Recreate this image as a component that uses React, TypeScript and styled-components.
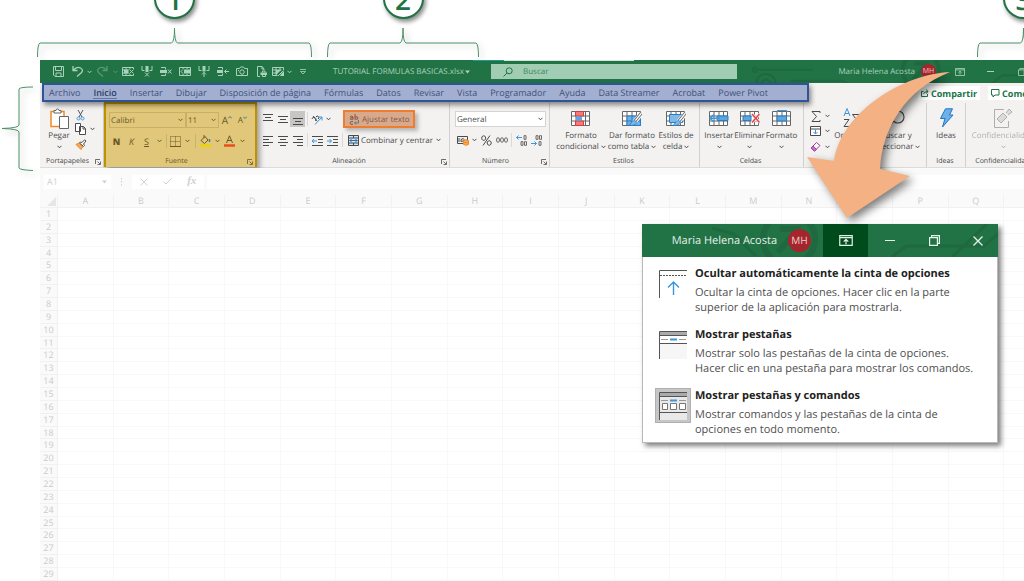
import React from "react";
import styled, { createGlobalStyle, css } from "styled-components";

const green = "#217346";
const ink = "#4a4a4a";
const blue = "#3a96dd";
const orange = "#f08a24";

const GlobalStyle = createGlobalStyle`
  * { box-sizing: border-box; }
  body { margin: 0; background: #fff; font-family: "Open Sans", "Noto Sans", sans-serif; font-size: 8px; line-height: 11px; color: ${ink}; text-rendering: geometricPrecision; }
  button, input, select { font: inherit; color: inherit; margin: 0; padding: 0; border: 0; background: none; text-rendering: inherit; }
  svg { display: block; flex: none; }
`;

/* ---------- page frame ---------- */

const Page = styled.main`
  position: relative;
  display: flex;
  flex-direction: column;
  height: 100vh;
  overflow: hidden;
`;
const Callouts = styled.header`
  display: flex;
  flex: none;
  gap: 15px;
  height: 60px;
  padding-left: 37px;
  overflow: hidden;
`;
const Callout = styled.div<{ $w: number; $last?: boolean }>`
  display: flex;
  flex: none;
  flex-direction: column;
  align-items: center;
  gap: 8px;
  width: ${(p) => p.$w}px;
  margin-top: -22px;
  ${(p) => p.$last && css`margin-left: auto; margin-right: -46px;`}
  svg { filter: drop-shadow(3px 3px 3px rgba(0, 0, 0, 0.25)); }
`;
const Badge = styled.span`
  display: flex;
  flex: none;
  align-items: center;
  justify-content: center;
  width: 41px;
  height: 41px;
  padding-top: 2px;
  border: 2px solid ${green};
  border-radius: 50%;
  background: #fff;
  box-shadow: 2px 3px 4px rgba(0, 0, 0, 0.45);
  color: ${green};
  font-size: 28px;
  font-weight: 600;
  line-height: 36px;
`;
const Stage = styled.div`
  display: flex;
  flex: 1;
  min-height: 0;
`;
const Gutter = styled.div`
  flex: none;
  width: 40px;
  padding-top: 26px;
  svg { filter: drop-shadow(3px 3px 3px rgba(0, 0, 0, 0.25)); }
`;
const Workbook = styled.section`
  display: flex;
  flex: 1;
  flex-direction: column;
  min-width: 1027px;
  margin-right: -43px;
`;

/* ---------- title bar ---------- */

const TitleBar = styled.div`
  position: relative;
  display: flex;
  flex: none;
  align-items: center;
  height: 23px;
  padding-left: 9px;
  color: #a9d2ba;
  background:
    linear-gradient(#1a9c93, #1a9c93) 433px 0 / 31px 1px no-repeat,
    linear-gradient(#d5e5dc, #d5e5dc) 464px 0 / 130px 1px no-repeat,
    ${green};
`;
const Circuit = styled.svg`
  position: absolute;
  top: 0;
  right: 0;
`;
const BarButton = styled.button<{ $w: number; $dim?: boolean }>`
  position: relative;
  display: flex;
  flex: none;
  align-items: center;
  justify-content: center;
  width: ${(p) => p.$w}px;
  height: 23px;
  opacity: ${(p) => (p.$dim ? 0.4 : 1)};
`;
const FileName = styled.button`
  display: flex;
  flex: none;
  align-items: center;
  gap: 1px;
  width: 158px;
  padding-left: 19px;
  font-size: 8px;
  white-space: nowrap;
`;
const Search = styled.label`
  position: relative;
  display: flex;
  flex: none;
  align-items: center;
  gap: 10px;
  width: 246px;
  height: 15px;
  margin-left: 19px;
  padding-left: 12px;
  background: #a0cdb3;
  color: ${green};
  input { width: 160px; outline: 0; font-size: 8px; line-height: 11px; }
  input::placeholder { color: #3d8a5e; opacity: 1; }
`;
const Account = styled.button`
  position: relative;
  display: flex;
  align-items: center;
  gap: 6px;
  margin-left: auto;
  margin-right: 8px;
  font-size: 8px;
  white-space: nowrap;
`;
const Avatar = styled.span<{ $size: number }>`
  display: flex;
  flex: none;
  align-items: center;
  justify-content: center;
  width: ${(p) => p.$size}px;
  height: ${(p) => p.$size}px;
  border-radius: 50%;
  background: #a4262c;
  color: #f0c8ca;
  font-size: ${(p) => (p.$size > 20 ? 10 : 7)}px;
`;

/* ---------- tabs ---------- */

const TabRow = styled.div`
  display: flex;
  flex: none;
  height: 20px;
  padding-left: 2px;
  background: #f3f2f1;
`;
const Tabs = styled.nav`
  position: relative;
  z-index: 2;
  display: flex;
  flex: none;
  align-items: center;
  gap: 13px;
  width: 767px;
  height: 19px;
  padding-left: 5px;
  border: 2px solid #2f5597;
  background: #a2afd1;
  box-shadow: 2px 3px 5px rgba(0, 0, 0, 0.45);
`;
const Tab = styled.a<{ $on?: boolean }>`
  color: ${(p) => (p.$on ? "#2c3f68" : "#43527a")};
  font-size: 9px;
  font-weight: ${(p) => (p.$on ? 600 : 400)};
  text-decoration: none;
  white-space: nowrap;
  ${(p) => p.$on && css`box-shadow: 0 1px 0 #5d7b9f;`}
`;
const ShareButtons = styled.div`
  display: flex;
  gap: 8px;
  margin-left: 109px;
  padding-top: 3px;
`;
const Share = styled.button`
  display: flex;
  align-items: center;
  gap: 2px;
  height: 14px;
  padding: 0 3px;
  background: #fff;
  color: ${green};
  font-size: 9px;
  font-weight: 700;
`;

/* ---------- ribbon ---------- */

const Ribbon = styled.div`
  display: flex;
  flex: none;
  height: 65px;
  background: #f3f2f1;
  border-bottom: 1px solid #dcdcdc;
`;
const Group = styled.section<{ $w: number; $marked?: boolean }>`
  display: flex;
  flex: none;
  flex-direction: column;
  width: ${(p) => p.$w}px;
  border-right: 1px solid #d2d0ce;
  ${(p) =>
    p.$marked &&
    css`
      height: 65px;
      margin-top: -1px;
      border: solid #bf9000;
      border-width: 2px 2px 0;
      background: #e0c779;
      color: #6a5a28;
      box-shadow: 3px 3px 5px rgba(0, 0, 0, 0.35);
    `}
`;
const GroupBody = styled.div<{ $pad?: number; $gap?: number }>`
  display: flex;
  flex: 1;
  gap: ${(p) => p.$gap ?? 0}px;
  padding: 6px 0 0 ${(p) => p.$pad ?? 0}px;
`;
const GroupLabel = styled.h2`
  display: flex;
  align-items: center;
  justify-content: center;
  height: 13px;
  margin: 0;
  padding: 2px 2px 0 0;
  font-size: 7px;
  font-weight: 400;
  line-height: 11px;
  span { flex: 1; text-align: center; white-space: nowrap; }
`;
const Rows = styled.div<{ $gap?: number }>`
  display: flex;
  flex: none;
  flex-direction: column;
  gap: ${(p) => p.$gap ?? 1}px;
`;
const Row = styled.div<{ $gap?: number; $h?: number }>`
  display: flex;
  align-items: center;
  gap: ${(p) => p.$gap ?? 0}px;
  height: ${(p) => p.$h ?? 20}px;
`;
const Tool = styled.button<{ $w?: number; $on?: boolean }>`
  display: flex;
  flex: none;
  align-items: center;
  justify-content: center;
  width: ${(p) => p.$w ?? 15}px;
  height: 16px;
  background: ${(p) => (p.$on ? "#c8c6c4" : "none")};
  font-size: 10px;
`;
const Letter = styled(Tool)<{ $kind?: "bold" | "italic" | "underline" }>`
  font-size: 9px;
  font-weight: ${(p) => (p.$kind === "bold" ? 800 : 400)};
  font-style: ${(p) => (p.$kind === "italic" ? "italic" : "normal")};
  text-decoration: ${(p) => (p.$kind === "underline" ? "underline" : "none")};
`;
const Rule = styled.i`
  flex: none;
  width: 1px;
  height: 14px;
  margin: 0 2px;
  background: rgba(0, 0, 0, 0.1);
`;
const TextTool = styled.button<{ $marked?: boolean }>`
  display: flex;
  align-items: center;
  gap: 2px;
  height: 18px;
  padding: 0 2px 0 3px;
  white-space: nowrap;
  ${(p) =>
    p.$marked &&
    css`
      width: 72px;
      border: 2px solid #ed7d31;
      background: #d9a98c;
      color: #82584a;
      padding: 0 4px;
      box-shadow: 3px 3px 4px rgba(0, 0, 0, 0.25);
    `}
`;
const SelectBox = styled.label<{ $w: number; $white?: boolean }>`
  display: flex;
  flex: none;
  align-items: center;
  width: ${(p) => p.$w}px;
  height: 16px;
  padding: 0 2px 0 1px;
  border: 1px solid ${(p) => (p.$white ? "#d6d4d2" : "#c9b067")};
  background: ${(p) => (p.$white ? "#fff" : "none")};
  select { flex: 1; min-width: 0; appearance: none; outline: 0; font-size: 8px; }
`;
const BigButton = styled.button<{ $w: number; $dim?: boolean }>`
  display: flex;
  flex: none;
  flex-direction: column;
  align-items: center;
  gap: 3px;
  width: ${(p) => p.$w}px;
  white-space: nowrap;
  opacity: ${(p) => (p.$dim ? 0.4 : 1)};
  > span { display: flex; flex-direction: column; align-items: center; height: 22px; }
`;
const Picture = styled.i`
  display: flex;
  align-items: center;
  justify-content: center;
  height: 18px;
`;
const Line = styled.span`
  display: flex;
  align-items: center;
  gap: 2px;
  height: 11px;
`;

/* ---------- formula bar and sheet ---------- */

const FormulaBar = styled.div`
  display: flex;
  flex: none;
  align-items: center;
  height: 27px;
  padding: 0 0 0 4px;
  background: #fafafa;
  color: #d0d0d0;
  font-size: 9px;
`;
const NameBox = styled.label`
  display: flex;
  align-items: center;
  width: 67px;
  height: 14px;
  padding: 0 4px 0 3px;
  background: #fff;
  input { flex: 1; min-width: 0; }
`;
const Entry = styled.div`
  display: flex;
  align-items: center;
  justify-content: space-around;
  width: 72px;
  height: 14px;
  margin: 0 3px 0 2px;
  background: #fff;
  i { font-family: "Liberation Serif", serif; font-size: 11px; font-weight: 700; }
`;
const FormulaInput = styled.input`
  && { flex: 1; height: 14px; background: #fff; }
`;
const SheetArea = styled.div`
  flex: 1;
  min-height: 386px;
  background: #fafafa;
`;
const Sheet = styled.table`
  width: calc(100% - 7px);
  height: 100%;
  table-layout: fixed;
  border-collapse: separate;
  border-spacing: 0;
  background: #fff;
  color: #cbcbcb;
  font-size: 9px;
  line-height: 10px;
  th { padding: 0; border: solid #f1f1f1; border-width: 0 1px 1px 0; background: #fafafa; font-weight: 400; text-align: center; }
  td { padding: 0; border: solid #f8f8f8; border-width: 0 1px 1px 0; }
  thead th { height: 13px; }
  thead th:first-child { width: 18px; }
  tbody th { height: 12px; }
`;

/* ---------- overlays ---------- */

const Arrow = styled.svg`
  position: absolute;
  top: 60px;
  left: 800px;
  z-index: 4;
  filter: drop-shadow(4px 4px 4px rgba(0, 0, 0, 0.5));
`;
const Popup = styled.aside`
  position: absolute;
  top: 224px;
  left: 642px;
  z-index: 3;
  width: 356px;
  background: #fff;
  border: 1px solid #b9b9b9;
  border-top: 0;
  box-shadow: 3px 3px 5px rgba(0, 0, 0, 0.5);
`;
const PopupBar = styled.div`
  position: relative;
  display: flex;
  align-items: center;
  justify-content: flex-end;
  height: 33px;
  margin: 0 -1px;
  background: ${green};
  color: #e6f1ea;
  font-size: 11px;
`;
const PopupName = styled.span`
  position: relative;
  display: flex;
  align-items: center;
  gap: 11px;
  margin-right: 12px;
  white-space: nowrap;
`;
const PopupButton = styled.button<{ $w: number; $on?: boolean }>`
  position: relative;
  display: flex;
  align-items: center;
  justify-content: center;
  width: ${(p) => p.$w}px;
  height: 33px;
  background: ${(p) => (p.$on ? "#004b1c" : "none")};
`;
const Options = styled.ul`
  display: flex;
  flex-direction: column;
  gap: 12px;
  margin: 0;
  padding: 9px 10px 5px 12px;
  list-style: none;
`;
const Option = styled.button`
  display: flex;
  gap: 4px;
  width: 100%;
  text-align: left;
  font-size: 11px;
  line-height: 15px;
  color: #505050;
  white-space: nowrap;
  b { display: block; height: 19px; color: #222; line-height: 16px; }
`;
const OptionIcon = styled.i<{ $on?: boolean }>`
  flex: none;
  display: flex;
  align-items: center;
  justify-content: center;
  width: 36px;
  height: 35px;
  border: 1px solid ${(p) => (p.$on ? "#b0b0b0" : "transparent")};
  background: ${(p) => (p.$on ? "#c6c6c6" : "none")};
`;

/* ---------- drawings ---------- */

type DrawProps = { w: number; h: number; box?: string; children: React.ReactNode; sw?: number };
const Draw = ({ w, h, box, children, sw = 1 }: DrawProps) => (
  <svg width={w} height={h} viewBox={box ?? `0 0 ${w} ${h}`} fill="none" stroke="currentColor" strokeWidth={sw} aria-hidden="true">
    {children}
  </svg>
);
const Chevron = () => (
  <Draw w={5} h={4}><path d="M.5 .8 2.5 2.8 4.5 .8" /></Draw>
);
const Triangle = () => (
  <Draw w={5} h={4}><path d="M0 .5h5L2.500 3.500z" fill="currentColor" stroke="none" /></Draw>
);
const Launcher = () => (
  <Draw w={6} h={6}><path d="M.5 5V.5H5M2.500 2.500 5 5M5.500 2.500v3h-3" strokeWidth=".8" /></Draw>
);
const Brace = ({ w }: { w: number }) => {
  const m = w / 2;
  return (
    <Draw w={w} h={32}>
      <path stroke="#4b9069" d={`M.5 30Q.5 17 3 16H${m - 3}Q${m} 15 ${m} 1Q${m} 15 ${m + 3} 16H${w - 3}Q${w - 0.5} 17 ${w - 0.5} 30`} />
    </Draw>
  );
};
const SideBrace = () => (
  <Draw w={36} h={86}>
    <path stroke="#4b9069" d="M33 1Q20 1 19 3V39Q19 42 2 42.500Q19 43 19 46V82Q20 84 33 84.500" />
  </Draw>
);
const RibbonIcon = ({ w = 10 }: { w?: number }) => (
  <Draw w={w} h={Math.round(w * 0.8)} box="0 0 15 12" sw={1.3}>
    <path d="M.7 .7h13.600v10.600H.7zM.7 2.900h13.600M7.500 10V5M5 7.200 7.500 4.800 10 7.200" />
  </Draw>
);
const RestoreIcon = ({ s }: { s: number }) => (
  <Draw w={s} h={s} box="0 0 11 11" sw={1.2}><path d="M.6 2.600h7.800v7.800H.6zM2.600 2.600V.6h7.800v7.800h-2" /></Draw>
);

/* small table glyph with an action mark, used in the quick access bar */
const Sheetlet = ({ kind }: { kind: number }) => (
  <Draw w={12} h={11}>
    {kind === 0 && (
      <>
        <path d="M11.500 3V1.500H.5v8h11V8M.5 4h6M.5 7h6M4 1v2M4 8v2M8 1v2M8 8v2M7.500 3.500l4 4M11.500 3.500l-4 4" />
        <path fill="currentColor" stroke="none" d="M2 3.500h4.500v4H2z" />
      </>
    )}
    {kind === 1 && (
      <>
        <path d="M1 0v4.500h2.500M11 0v4.500H8.500M4 6.500l4 4M8 6.500l-4 4" />
        <path fill="currentColor" stroke="none" d="M4.500 0h3v6h-3z" />
      </>
    )}
    {kind === 2 && (
      <>
        <path d="M1 1.500h4.500v2M1 9.500h4.500v-2M8 3.500l3.500 4M11.500 3.500 8 7.500" />
        <path fill="currentColor" stroke="none" d="M0 4h7v3H0z" />
      </>
    )}
    {kind === 3 && (
      <>
        <path d="M.5 1.500h11v8H.5zM4 1v2M8 1v2M4 8v2M8 8v2M4 3.500 2 5.500l2 2" />
        <path fill="currentColor" stroke="none" d="M5 3.500h6v4H5z" />
      </>
    )}
    {kind === 4 && (
      <>
        <path d="M1 0v4.500h2.500M11 0v4.500H8.500M6 6v5M4 8.500l2-2 2 2" />
        <path fill="currentColor" stroke="none" d="M4.500 0h3v5.500h-3z" />
      </>
    )}
    {kind === 5 && (
      <>
        <path d="M1 1.500h4.500v2M1 9.500h4.500v-2M12 5.500H7.500M9.500 3.500l-2 2 2 2" />
        <path fill="currentColor" stroke="none" d="M0 4h6v3H0z" />
      </>
    )}
    {kind === 6 && <path d="M.5 2.500h3L4.500 1h3l1 1.500h3v7H.5zM6 3.800a2.200 2.200 0 1 0 .01 0zM2 4.500h1" />}
    {kind === 7 && (
      <>
        <path d="M9 4V3L7 .5H2.500v10H5M7 .5V3h2M7.500 6.500V5h2.500v1.500M7.500 9v1.500h3V9" />
        <path fill="currentColor" stroke="none" d="M5.500 6.500H12V9H5.500z" />
      </>
    )}
    {kind === 8 && (
      <>
        <path d="M11.500 4V1.500H.5v8h5M.5 4h9M.5 7h5M4 1v8M8 1v4M11.500 4.500 6 10" />
        <path fill="currentColor" stroke="none" d="M4 4h5L4 9zM9 8l3-3v5H8z" />
      </>
    )}
  </Draw>
);

const LinesIcon = ({ ys, align = "left" }: { ys: number[]; align?: "left" | "center" | "right" }) => (
  <Draw w={10} h={11}>
    {ys.map((y, i) => {
      const len = i % 2 ? 6 : 10;
      const x = align === "left" ? 0 : align === "center" ? (10 - len) / 2 : 10 - len;
      return <path key={y} d={`M${x} ${y + 0.5}h${len}`} />;
    })}
  </Draw>
);
const IndentIcon = ({ out }: { out?: boolean }) => (
  <Draw w={11} h={11}>
    <path d="M0 1.500h11M6 4.500h5M6 7.500h5M0 10.500h11" />
    <path stroke={blue} d={out ? "M5 6H0M2 4 0 6l2 2" : "M0 6h4.500M2.500 4l2 2-2 2"} />
  </Draw>
);
const TableGlyph = ({ children }: { children?: React.ReactNode }) => (
  <Draw w={20} h={16}>
    <path fill="#fff" stroke="#666" d="M.5 1.500h18v14H.5zM.5 6h18M.5 11h18M5 1.500v14M10 1.500v14M14.500 1.500v14" />
    {children}
  </Draw>
);
const Brush = () => (
  <>
    <path d="M19.500 3.500 12 12.500" stroke="#fff" strokeWidth="4.500" />
    <path d="M19.500 3 13 11" stroke="#666" strokeWidth="3" />
    <path d="M19.500 3 13 11" stroke="#fff" strokeWidth="1.200" />
    <path d="M12.500 10.500q2 .5 2 2.500-2 3-8.500 2.500 3-.5 3-2.500 1-2.500 3.500-2.500z" fill="#7db8e8" stroke="#2b7cc0" strokeWidth=".8" />
  </>
);
const CircuitArt = ({ w, h, box, extra }: { w: number; h: number; box: string; extra?: boolean }) => (
  <Circuit width={w} height={h} viewBox={box} fill="none" stroke="#1f6840" strokeWidth="3" aria-hidden="true">
    {!extra && <path d="M70 4l22 6 22 22" />}
    <path d="M250 33l14-11h78l14-12M310 33 345 0" />
    <circle cx="147" cy="15" r="26" strokeWidth="6" />
    <path d="M138 5h18v16M136 28l20-22" strokeWidth="6" />
    {extra && (
      <>
        <path d="M-87 14H-8M-40 30H35l18 10" />
        <circle cx="-91" cy="14" r="3" />
        <circle cx="-75" cy="34" r="14" />
        <circle cx="-75" cy="34" r="6" />
      </>
    )}
  </Circuit>
);

/* ---------- content ---------- */

const tabs = ["Archivo", "Inicio", "Insertar", "Dibujar", "Disposición de página", "Fórmulas", "Datos", "Revisar", "Vista", "Programador", "Ayuda", "Data Streamer", "Acrobat", "Power Pivot"];
const columns = "ABCDEFGHIJKLMNOPQR".split("");
const rows = Array.from({ length: 29 }, (_, i) => i + 1);

const options = [
  {
    title: "Ocultar automáticamente la cinta de opciones",
    lines: ["Ocultar la cinta de opciones. Hacer clic en la parte", "superior de la aplicación para mostrarla."],
    icon: (
      <Draw w={28} h={28}>
        <path stroke="#555" d="M.5 28V.5H28" />
        <path stroke="#555" strokeDasharray="2 1" d="M1 5.500h27" />
        <path stroke={blue} strokeWidth="1.400" d="M14.500 25V12M9 17.500l5.500-5.500 5.500 5.500" />
      </Draw>
    ),
  },
  {
    title: "Mostrar pestañas",
    lines: ["Mostrar solo las pestañas de la cinta de opciones.", "Hacer clic en una pestaña para mostrar los comandos."],
    icon: (
      <Draw w={28} h={28}>
        <path fill="#f6f6f6" stroke="none" d="M1 13h27v15H1z" />
        <path fill="#aaa" stroke="none" d="M1 1h27v3H1z" />
        <path stroke="#555" d="M.5 28V.5H28M1 4.500h27M1 12.500h27" />
        <path stroke="#999" d="M2 8.500h7M20 8.500h7" />
        <path stroke={blue} strokeWidth="2" d="M11 8.500h7" />
      </Draw>
    ),
  },
  {
    title: "Mostrar pestañas y comandos",
    on: true,
    lines: ["Mostrar comandos y las pestañas de la cinta de", "opciones en todo momento."],
    icon: (
      <Draw w={28} h={28}>
        <path fill="#e9e9e9" stroke="none" d="M1 1h27v27H1z" />
        <path fill="#aaa" stroke="none" d="M1 1h27v3H1z" />
        <path stroke="#555" d="M.5 28V.5H28M1 4.500h27M1 20.500h27" />
        <path stroke="#999" d="M2 8.500h7M20 8.500h7" />
        <path stroke={blue} strokeWidth="2" d="M11 8.500h7" />
        <path stroke="#777" fill="#fff" d="M3.500 11.500h5v6h-5zM11.500 11.500h6v6h-6zM20.500 11.500h6v6h-6z" />
      </Draw>
    ),
  },
];

const Label = ({ children, launch }: { children: string; launch?: boolean }) => (
  <GroupLabel>
    <span>{children}</span>
    {launch && <Launcher />}
  </GroupLabel>
);

const Big = ({ w, icon, lines, arrow = true, dim }: { w: number; icon: React.ReactNode; lines: string[]; arrow?: boolean; dim?: boolean }) => (
  <BigButton $w={w} $dim={dim}>
    <Picture>{icon}</Picture>
    <span>
      {lines.map((t, i) => (
        <Line key={t + i}>
          {t}
          {arrow && i === lines.length - 1 && <Chevron />}
        </Line>
      ))}
    </span>
  </BigButton>
);

export default function App() {
  return (
    <Page>
      <GlobalStyle />
      <Callouts>
        <Callout $w={275}><Badge>1</Badge><Brace w={275} /></Callout>
        <Callout $w={152}><Badge>2</Badge><Brace w={152} /></Callout>
        <Callout $w={93} $last><Badge>3</Badge><Brace w={93} /></Callout>
      </Callouts>

      <Stage>
        <Gutter><SideBrace /></Gutter>
        <Workbook>
          <TitleBar>
            <CircuitArt w={340} h={23} box="-130 0 486 33" extra />
            <BarButton $w={19} aria-label="Guardar">
              <Draw w={11} h={11}><path d="M.5 .5h10v10H2L.5 9zM2.500 .5v4h6v-4M3 10.500v-3.500h5v3.500" /></Draw>
            </BarButton>
            <BarButton $w={18} aria-label="Deshacer">
              <Draw w={11} h={11} sw={1.3}><path d="M1 0v4.500h4.500M1 4.500Q5 0 8.500 2t.5 5L5 10.500" /></Draw>
            </BarButton>
            <BarButton $w={6} aria-label="Opciones de deshacer"><Chevron /></BarButton>
            <BarButton $w={20} $dim aria-label="Rehacer">
              <Draw w={11} h={11} sw={1.3}><path d="M10 0v4.500H5.500M10 4.500Q6 0 2.500 2T2 7l4 3.500" /></Draw>
            </BarButton>
            <BarButton $w={6} $dim aria-label="Opciones de rehacer"><Chevron /></BarButton>
            {[0, 1, 2, 3, 4, 5, 6, 7].map((k) => (
              <BarButton key={k} $w={19} aria-label={`Acceso rápido ${k + 1}`}><Sheetlet kind={k} /></BarButton>
            ))}
            <BarButton $w={16} aria-label="Formato de tabla"><Sheetlet kind={8} /></BarButton>
            <BarButton $w={6} aria-label="Más formatos"><Chevron /></BarButton>
            <BarButton $w={22} aria-label="Personalizar">
              <Draw w={6} h={6}><path d="M0 .5h6M.5 2.500h5L3 5z" strokeWidth=".8" /></Draw>
            </BarButton>
            <FileName>TUTORIAL FORMULAS BASICAS.xlsx <Triangle /></FileName>
            <Search>
              <Draw w={10} h={10}><circle cx="6.200" cy="3.800" r="3" /><path d="M4 6 .5 9.500" /></Draw>
              <input placeholder="Buscar" aria-label="Buscar" />
            </Search>
            <Account>Maria Helena Acosta <Avatar $size={15}>MH</Avatar></Account>
            <BarButton $w={31} aria-label="Opciones de la cinta"><RibbonIcon /></BarButton>
            <BarButton $w={31} aria-label="Minimizar"><Draw w={7} h={3}><path d="M0 1.500h7" /></Draw></BarButton>
            <BarButton $w={31} aria-label="Restaurar"><RestoreIcon s={8} /></BarButton>
            <BarButton $w={30} aria-label="Cerrar"><Draw w={8} h={8}><path d="M0 0l8 8M8 0 0 8" /></Draw></BarButton>
          </TitleBar>

          <TabRow>
            <Tabs>
              {tabs.map((t) => <Tab key={t} href="#" $on={t === "Inicio"}>{t}</Tab>)}
            </Tabs>
            <ShareButtons>
              <Share>
                <Draw w={8} h={8}><path d="M2.500 2.500H.5v5h6V5M2.500 5Q3 2.500 7 2.500M5 .5l2.200 2L5 4.500" /></Draw>
                Compartir
              </Share>
              <Share>
                <Draw w={9} h={9}><path d="M.5 .5h7.500v5.500H4L2 8V6H.5z" /></Draw>
                Comentarios
              </Share>
            </ShareButtons>
          </TabRow>

          <Ribbon>
            <Group $w={64}>
              <GroupBody $pad={5}>
                <BigButton $w={28}>
                  <Picture>
                    <Draw w={19} h={21}>
                      <path stroke={orange} strokeWidth="1.500" fill="#fff" d="M1 3.500h13v15H1z" />
                      <path fill="#fff" stroke="#666" d="M4 5V2.500h2a1.500 1.500 0 0 1 3 0h2V5zM9.500 8.500h9v12h-9z" />
                    </Draw>
                  </Picture>
                  <span><Line>Pegar</Line><Line><Chevron /></Line></span>
                </BigButton>
                <Rows $gap={0}>
                  <Row $h={12}><Tool aria-label="Cortar">
                    <Draw w={9} h={11}><path stroke="#555" d="M2 0l4 7M7 0 3 7" /><path stroke={blue} d="M2.500 7a1.500 1.500 0 1 0 .01 0zM6.500 7a1.500 1.500 0 1 0 .01 0z" /></Draw>
                  </Tool></Row>
                  <Row $h={16}>
                    <Tool aria-label="Copiar"><Draw w={11} h={12}><path fill="#fff" d="M.5 .5h5v8h-5zM4.500 3.500h4l2 2v6h-6zM8 3.500V6h2.500" /></Draw></Tool>
                    <Tool $w={9} aria-label="Opciones de copiar"><Chevron /></Tool>
                  </Row>
                  <Row $h={16}><Tool aria-label="Copiar formato">
                    <Draw w={12} h={12}><path fill="#f7a85a" stroke={orange} d="M1 5.500l5 5 2-3-4-3.500z" /><path fill="#fff" d="M4.500 4 8.500 7.500 9.500 6.500 8.500 5 11 2 9.500 .8 7 3.500 5.500 3z" /></Draw>
                  </Tool></Row>
                </Rows>
              </GroupBody>
              <Label launch>Portapapeles</Label>
            </Group>

            <Group $w={153} $marked>
              <GroupBody $pad={3}>
                <Rows>
                  <Row>
                    <SelectBox $w={77}><select aria-label="Fuente"><option>Calibri</option></select><Chevron /></SelectBox>
                    <SelectBox $w={33}><select aria-label="Tamaño de fuente"><option>11</option></select><Chevron /></SelectBox>
                    <Tool $w={16} aria-label="Aumentar tamaño">A<Draw w={4} h={9}><path stroke="#3f7f88" d="M0 2.500l2-2 2 2" /></Draw></Tool>
                    <Tool $w={15} aria-label="Reducir tamaño"><small>A</small><Draw w={4} h={9}><path stroke="#3f7f88" d="M0 .5l2 2 2-2" /></Draw></Tool>
                  </Row>
                  <Row>
                    <Letter $kind="bold">N</Letter>
                    <Letter $kind="italic">K</Letter>
                    <Letter $kind="underline">S</Letter>
                    <Tool $w={10} aria-label="Opciones de subrayado"><Chevron /></Tool>
                    <Rule />
                    <Tool $w={13} aria-label="Bordes"><Draw w={11} h={11}><path d="M.5 .5h10v10H.5zM5.500 .5v10M.5 5.500h10" strokeDasharray="1 1" /><path d="M0 10.500h11" /></Draw></Tool>
                    <Tool $w={11} aria-label="Opciones de bordes"><Chevron /></Tool>
                    <Rule />
                    <Tool $w={14} aria-label="Color de relleno"><Draw w={11} h={12}><path d="M1 5.500 5 1.500l3 3.500-3.500 3.500zM4 0v3" /><path d="M9.500 4v3" stroke="#3f7f88" strokeWidth="1.500" /><path d="M0 10.500h11" stroke="#ecd500" strokeWidth="2.500" /></Draw></Tool>
                    <Tool $w={10} aria-label="Opciones de relleno"><Chevron /></Tool>
                    <Tool $w={15} aria-label="Color de fuente"><Draw w={11} h={12}><path d="M2.500 8 5.500 .8 8.500 8M3.500 5.500h4" /><path d="M0 10.500h11" stroke="#e8501c" strokeWidth="2.500" /></Draw></Tool>
                    <Tool $w={10} aria-label="Opciones de color"><Chevron /></Tool>
                  </Row>
                </Rows>
              </GroupBody>
              <Label launch>Fuente</Label>
            </Group>

            <Group $w={193}>
              <GroupBody $pad={3}>
                <Rows>
                  <Row>
                    <Tool aria-label="Alinear arriba"><LinesIcon ys={[0, 3, 6]} align="center" /></Tool>
                    <Tool aria-label="Alinear en el medio"><LinesIcon ys={[2, 5, 8]} align="center" /></Tool>
                    <Tool $on aria-label="Alinear abajo"><LinesIcon ys={[4, 7, 10]} align="center" /></Tool>
                    <Rule />
                    <Tool $w={13} aria-label="Orientación"><Draw w={12} h={11}><path d="M2 2l4 5M1 5a2 2 0 1 1 3 2M5 3a1.500 1.500 0 1 1 2 2" /><path stroke={blue} d="M4 10.500 11 3M7.500 3H11v3.500" /></Draw></Tool>
                    <Tool $w={10} aria-label="Opciones de orientación"><Chevron /></Tool>
                  </Row>
                  <Row>
                    <Tool aria-label="Alinear a la izquierda"><LinesIcon ys={[1, 4, 7, 10]} /></Tool>
                    <Tool aria-label="Centrar"><LinesIcon ys={[1, 4, 7, 10]} align="center" /></Tool>
                    <Tool aria-label="Alinear a la derecha"><LinesIcon ys={[1, 4, 7, 10]} align="right" /></Tool>
                    <Rule />
                    <Tool aria-label="Disminuir sangría"><IndentIcon out /></Tool>
                    <Tool aria-label="Aumentar sangría"><IndentIcon /></Tool>
                  </Row>
                </Rows>
                <Rows>
                  <Row $gap={3}>
                    <i />
                    <TextTool $marked>
                      <Draw w={11} h={11}><path d="M1 3q2-2 3 0v2.500M4 3.500Q1 3.500 1 4.700T4 5M6 0v5.500M6 3q3-1 3 1T6 5M4 7.500Q1 7 1 9t3 1.200" /><path stroke="#4d7c9e" d="M9.500 6v3H5.500M7 7.500 5.500 9 7 10.500" /></Draw>
                      Ajustar texto
                    </TextTool>
                  </Row>
                  <Row>
                    <Rule />
                    <TextTool>
                      <Draw w={11} h={11}><path fill="#cfe5f7" d="M.5 .5h10v10H.5zM.5 3h10M.5 8h10M5.500 .5V3M5.500 8v2.500" /><path stroke="#1d77c4" d="M1.500 5.500h8M3.500 4 2 5.500 3.500 7M7.500 4 9 5.500 7.500 7" /></Draw>
                      Combinar y centrar
                    </TextTool>
                    <Tool $w={7} aria-label="Opciones de combinar"><Chevron /></Tool>
                  </Row>
                </Rows>
              </GroupBody>
              <Label launch>Alineación</Label>
            </Group>

            <Group $w={100}>
              <GroupBody $pad={5}>
                <Rows>
                  <Row>
                    <SelectBox $w={91} $white><select aria-label="Formato de número"><option>General</option></select><Chevron /></SelectBox>
                  </Row>
                  <Row>
                    <Tool $w={16} aria-label="Formato de contabilidad"><Draw w={12} h={11}><path d="M.5 1.500h10v7H.5zM2 3v4M4 4.500q3-2 3 0t-3 2z" /><path fill="#f7a85a" stroke={orange} d="M6.500 5.500q2.500-1.500 5 0v4q-2.500 1.500-5 0zM6.500 7.500h5" /></Draw></Tool>
                    <Tool $w={7} aria-label="Opciones de contabilidad"><Chevron /></Tool>
                    <Tool $w={16} aria-label="Porcentaje"><Draw w={11} h={11}><path d="M9 .5 2 10.500M2.700 .8a2 2.300 0 1 0 .01 0zM8.200 5.700a2 2.300 0 1 0 .01 0z" /></Draw></Tool>
                    <Tool $w={15} aria-label="Millares"><Draw w={12} h={6}><path d="M2 .7q1.500 0 1.500 2.300T2 5.300.5 3 2 .7zM6 .7q1.500 0 1.500 2.300T6 5.300 4.500 3 6 .7zM10 .7q1.500 0 1.500 2.300T10 5.300 8.500 3 10 .7z" strokeWidth=".8" /></Draw></Tool>
                    <Rule />
                    <Tool aria-label="Aumentar decimales"><Draw w={11} h={11}><path d="M8 .7h2v3.600H8zM5 6.700h2v3.600H5zM8.500 6.700h2v3.600h-2z" strokeWidth=".8" /><path stroke={blue} d="M6 2.500H.5M2.500 .5l-2 2 2 2" /></Draw></Tool>
                    <Tool aria-label="Disminuir decimales"><Draw w={11} h={11}><path d="M5 .7h2v3.600H5zM8.500 .7h2v3.600h-2zM8 6.700h2v3.600H8z" strokeWidth=".8" /><path stroke={blue} d="M0 8.500h5.500M3.500 6.500l2 2-2 2" /></Draw></Tool>
                  </Row>
                </Rows>
              </GroupBody>
              <Label launch>Número</Label>
            </Group>

            <Group $w={150}>
              <GroupBody $pad={4}>
                <Big w={54} lines={["Formato", "condicional"]} icon={
                  <TableGlyph><path fill="#f87878" stroke="#d83b3b" d="M4.500 1.500h8V6h-8zM4.500 11h8v4.500h-8z" /><path fill="#5aa7e6" stroke="none" d="M5 6.500h6v4H5z" /></TableGlyph>} />
                <Big w={48} lines={["Dar formato", "como tabla"]} icon={
                  <TableGlyph><path fill="#6db1ea" stroke="#2b7cc0" d="M5 6h13.500v9.500H5zM5 11h13.500M10 6v9.500" /><Brush /></TableGlyph>} />
                <Big w={40} lines={["Estilos de", "celda"]} icon={
                  <TableGlyph><path fill="#7fbaec" stroke="#2b7cc0" d="M3.500 4.500h13v8h-13z" /><Brush /></TableGlyph>} />
              </GroupBody>
              <Label>Estilos</Label>
            </Group>

            <Group $w={104}>
              <GroupBody $pad={4}>
                <Big w={30} lines={["Insertar", ""]} icon={
                  <TableGlyph><path fill="#5aa7e6" stroke="#2b7cc0" d="M8 6h11v4.500H8z" /><path stroke={blue} strokeWidth="1.500" d="M11 8.200H1M5 4.500 1 8.200 5 12" /></TableGlyph>} />
                <Big w={31} lines={["Eliminar", ""]} icon={
                  <TableGlyph><path fill="#5aa7e6" stroke="#2b7cc0" d="M3 6h8v4.500H3z" /><path stroke="#f3f2f1" strokeWidth="3" d="M12 4l7.500 8.500M19.500 4 12 12.500" /><path stroke="#e84545" strokeWidth="1.500" d="M12 4l7.500 8.500M19.500 4 12 12.500" /></TableGlyph>} />
                <Big w={33} lines={["Formato", ""]} icon={
                  <TableGlyph><path fill="#5aa7e6" stroke="#2b7cc0" d="M5 6h9.500v5H5z" /><path stroke={blue} d="M5 .5h10M5.500 0v2M14.500 0v2" /></TableGlyph>} />
              </GroupBody>
              <Label>Celdas</Label>
            </Group>

            <Group $w={123}>
              <GroupBody $pad={5}>
                <Rows $gap={0}>
                  <Row $h={14} $gap={3}><Tool $w={13} aria-label="Autosuma"><Draw w={10} h={11}><path d="M9 2V.5H1l4.500 5L1 10.500h8V9" /></Draw></Tool><Chevron /></Row>
                  <Row $h={16} $gap={3}><Tool $w={13} aria-label="Rellenar"><Draw w={11} h={10}><path fill="#fff" d="M.5 .5h10v9H.5zM.5 3h10" /><path stroke={blue} d="M5.500 3.500V8M3.500 6l2 2 2-2" /></Draw></Tool><Chevron /></Row>
                  <Row $h={16} $gap={3}><Tool $w={13} aria-label="Borrar"><Draw w={11} h={10}><path fill="#fff" stroke="#a33aa8" d="M1 6l5.500-5.500 3.500 3L4.500 9z" /><path fill="#c778cc" stroke="#a33aa8" d="M1 6l2-2 3.500 3.500-2 1.500z" /></Draw></Tool><Chevron /></Row>
                </Rows>
                <Big w={46} lines={["Ordenar y", "filtrar"]} icon={
                  <Draw w={20} h={20}><path stroke={blue} d="M1 8l3-7.500L7 8M2 5.500h4" /><path d="M1 11.500h5l-5 7h5.500M9.500 6.500h9l-3.500 4.500v5l-2-1.500V11z" /></Draw>} />
                <Big w={40} lines={["Buscar y", "seleccionar"]} icon={
                  <Draw w={17} h={17} sw={1.2}><circle cx="10" cy="7" r="6" /><path d="M5.500 11.500 1 16" /></Draw>} />
              </GroupBody>
              <Label>Edición</Label>
            </Group>

            <Group $w={39}>
              <GroupBody>
                <Big w={38} arrow={false} lines={["Ideas"]} icon={
                  <Draw w={15} h={20}><path fill="#6db1ea" stroke="#1d77c4" d="M6.500 .8h7L10.500 7H14L3.500 19l2.500-8.500H1.500z" /></Draw>} />
              </GroupBody>
              <Label>Ideas</Label>
            </Group>

            <Group $w={76}>
              <GroupBody $pad={4}>
                <Big w={66} dim lines={["Confidencialidad", ""]} icon={
                  <Draw w={20} h={20}><path d="M11 1.500H1.500v18h14V13" /><path fill="#bbb" d="M4 11l6-6 4 4-6 6zM13 5l3-4 3 3-4 3" /></Draw>} />
              </GroupBody>
              <Label>Confidencialidad</Label>
            </Group>
          </Ribbon>

          <FormulaBar>
            <NameBox><input aria-label="Cuadro de nombres" defaultValue="A1" /><Triangle /></NameBox>
            <Draw w={19} h={8}><path d="M10.500 0v1.500M10.500 3v1.500M10.500 6v1.500" /></Draw>
            <Entry>
              <Draw w={8} h={8}><path d="M.5 .5l7 7M7.500 .5l-7 7" /></Draw>
              <Draw w={9} h={7}><path d="M.5 3.500 3 6l5.500-5.500" /></Draw>
              <i>fx</i>
            </Entry>
            <FormulaInput aria-label="Barra de fórmulas" />
          </FormulaBar>

          <SheetArea>
            <Sheet>
              <thead>
                <tr>
                  <th aria-label="Seleccionar todo"><Draw w={17} h={12}><path fill="#e6e6e6" stroke="none" d="M16 2v9H7z" /></Draw></th>
                  {columns.map((c) => <th key={c} scope="col">{c}</th>)}
                </tr>
              </thead>
              <tbody>
                {rows.map((r) => (
                  <tr key={r}>
                    <th scope="row">{r}</th>
                    {columns.map((c) => <td key={c} />)}
                  </tr>
                ))}
              </tbody>
            </Sheet>
          </SheetArea>
        </Workbook>
      </Stage>

      <Popup>
        <PopupBar>
          <CircuitArt w={356} h={33} box="0 0 356 33" />
          <PopupName>Maria Helena Acosta <Avatar $size={23}>MH</Avatar></PopupName>
          <PopupButton $w={45} $on aria-label="Opciones de presentación de la cinta"><RibbonIcon w={14} /></PopupButton>
          <PopupButton $w={44} aria-label="Minimizar"><Draw w={10} h={3}><path d="M0 1.500h10" /></Draw></PopupButton>
          <PopupButton $w={45} aria-label="Restaurar"><RestoreIcon s={11} /></PopupButton>
          <PopupButton $w={41} aria-label="Cerrar"><Draw w={10} h={10} sw={1.3}><path d="M.5 .5l9 9M9.500 .5l-9 9" /></Draw></PopupButton>
        </PopupBar>
        <Options>
          {options.map((o) => (
            <li key={o.title}>
              <Option>
                <OptionIcon $on={o.on}>{o.icon}</OptionIcon>
                <span>
                  <b>{o.title}</b>
                  {o.lines[0]}
                  <br />
                  {o.lines[1]}
                </span>
              </Option>
            </li>
          ))}
        </Options>
      </Popup>

      <Arrow width="160" height="170" viewBox="800 60 160 170" aria-hidden="true">
        <path fill="#f4b183" d="M950 72C905 74 842 110 834 161L807 157 847 218 910 176 880 169C882 130 904 90 950 72z" />
      </Arrow>
    </Page>
  );
}
